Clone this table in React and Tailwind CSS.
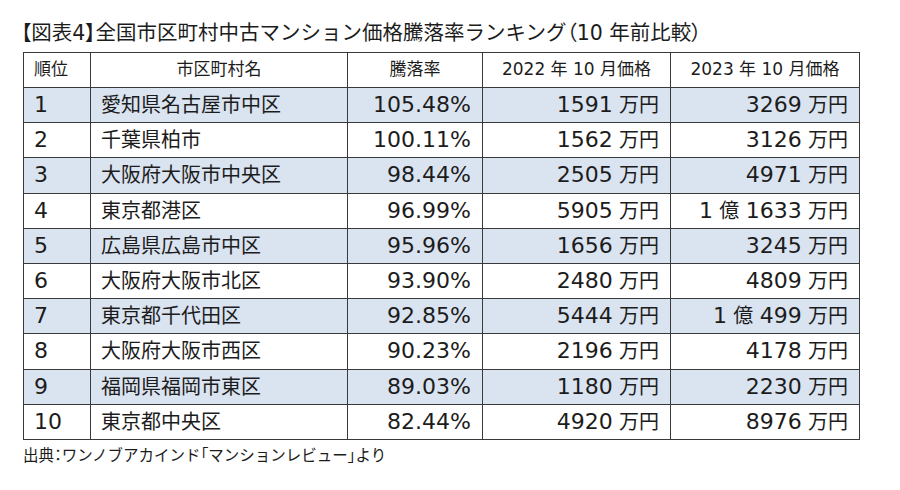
import React from 'react';

const rows = [
  ['1', '愛知県名古屋市中区', '105.48%', '1591 万円', '3269 万円'],
  ['2', '千葉県柏市', '100.11%', '1562 万円', '3126 万円'],
  ['3', '大阪府大阪市中央区', '98.44%', '2505 万円', '4971 万円'],
  ['4', '東京都港区', '96.99%', '5905 万円', '1 億 1633 万円'],
  ['5', '広島県広島市中区', '95.96%', '1656 万円', '3245 万円'],
  ['6', '大阪府大阪市北区', '93.90%', '2480 万円', '4809 万円'],
  ['7', '東京都千代田区', '92.85%', '5444 万円', '1 億 499 万円'],
  ['8', '大阪府大阪市西区', '90.23%', '2196 万円', '4178 万円'],
  ['9', '福岡県福岡市東区', '89.03%', '1180 万円', '2230 万円'],
  ['10', '東京都中央区', '82.44%', '4920 万円', '8976 万円'],
];

// digits get a slightly bigger size than kanji, like the source chart
const Num = ({ text }) =>
  text.split(/(\d[\d.%]*)/).map((part, i) =>
    /^\d/.test(part) ? (
      <span key={i} className="text-[22px]">{part}</span>
    ) : (
      <span key={i}>{part}</span>
    )
  );

const Palt = ({ children }) => (
  <span className="[font-feature-settings:'palt']">{children}</span>
);

export default function App() {
  return (
    <div className="w-[900px] h-[490px] bg-white text-[#1c1c1c] font-['DejaVu_Sans','Noto_Sans_CJK_JP',sans-serif] pl-[23px] pt-[21px]">
      <h1 className="text-[20.5px] leading-[25px] h-[31px] -ml-[2px] whitespace-nowrap">
        <Palt>【</Palt>図表4<Palt>】</Palt>全国市区町村中古マンション価格騰落率ランキング<Palt>（</Palt>10 年前比較<Palt>）</Palt>
      </h1>
      <table className="border-collapse table-fixed w-[837px] border-[1.5px] border-[#3a3a3a]">
        <colgroup>
          <col className="w-[67px]" />
          <col className="w-[257px]" />
          <col className="w-[135px]" />
          <col className="w-[188px]" />
          <col className="w-[189px]" />
        </colgroup>
        <thead>
          <tr className="h-[35px] text-[17px]">
            <th className="border border-[#3a3a3a] font-normal text-left px-[10px]">順位</th>
            <th className="border border-[#3a3a3a] font-normal text-center">市区町村名</th>
            <th className="border border-[#3a3a3a] font-normal text-center">騰落率</th>
            <th className="border border-[#3a3a3a] font-normal text-center">2022 年 10 月価格</th>
            <th className="border border-[#3a3a3a] font-normal text-center">2023 年 10 月価格</th>
          </tr>
        </thead>
        <tbody>
          {rows.map((r, idx) => (
            <tr key={r[0]} className={`h-[35.2px] text-[20px] leading-none ${idx % 2 === 0 ? 'bg-[#dae3f0]' : 'bg-white'}`}>
              <td className="border border-[#3a3a3a] px-[10px] text-left"><Num text={r[0]} /></td>
              <td className="border border-[#3a3a3a] px-[10px] text-left">{r[1]}</td>
              <td className="border border-[#3a3a3a] pr-[11px] text-right"><Num text={r[2]} /></td>
              <td className="border border-[#3a3a3a] pr-[11px] text-right whitespace-nowrap"><Num text={r[3]} /></td>
              <td className="border border-[#3a3a3a] pr-[11px] text-right whitespace-nowrap"><Num text={r[4]} /></td>
            </tr>
          ))}
        </tbody>
      </table>
      <p className="mt-[6px] text-[15.5px] leading-[20px] whitespace-nowrap">
        出典<Palt>：</Palt>ワンノブアカインド<Palt>「</Palt>マンションレビュー<Palt>」</Palt>より
      </p>
    </div>
  );
}
